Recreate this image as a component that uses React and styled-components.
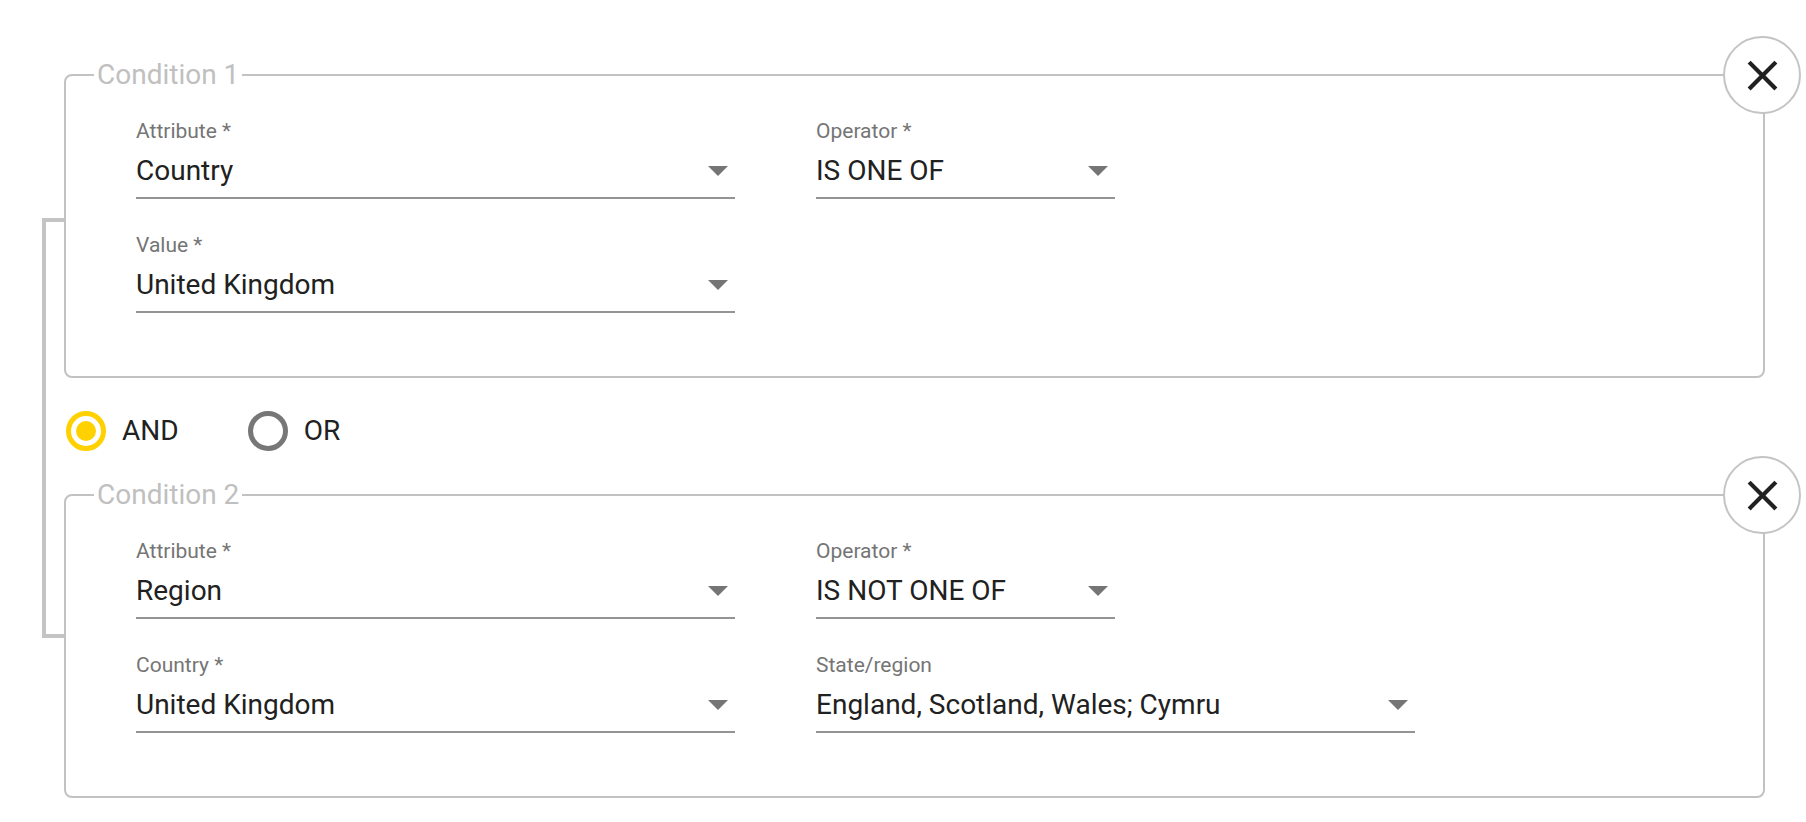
import React from "react";
import styled, { createGlobalStyle } from "styled-components";

const GlobalStyle = createGlobalStyle`
  body {
    margin: 0;
    background: #ffffff;
    font-family: Roboto, "Liberation Sans", sans-serif;
  }
`;

const Page = styled.div`
  padding: 60px 41px 0 42px;
`;

const Group = styled.div`
  display: flex;
`;

const Bracket = styled.div`
  width: 22px;
  flex: none;
  margin: 158px 0 160px;
  border: 4px solid #c4c4c4;
  border-right: none;
  box-sizing: border-box;
`;

const Stack = styled.div`
  flex: 1;
  display: flex;
  flex-direction: column;
`;

const CardWrap = styled.div`
  position: relative;
`;

const Fieldset = styled.fieldset`
  margin: 0;
  padding: 0;
  min-width: 0;
  border: 2px solid #c2c2c2;
  border-radius: 8px;
`;

const Legend = styled.legend`
  margin-left: 28px;
  padding: 0 3px;
  font-size: 28px;
  line-height: 30px;
  color: #c0c0c0;
`;

const Body = styled.div`
  display: flex;
  flex-direction: column;
  gap: 34px;
  padding: 29px 0 63px 70px;
`;

const FieldRow = styled.div`
  display: flex;
  gap: 81px;
`;

const Field = styled.div`
  width: ${(p) => (p.$narrow ? "299px" : "599px")};
  display: flex;
  flex-direction: column;
`;

const Label = styled.div`
  font-size: 21px;
  line-height: 24px;
  color: #757575;
  margin-bottom: 12px;
`;

const Control = styled.div`
  display: flex;
  align-items: center;
  justify-content: space-between;
  padding: 0 7px 10px 0;
  border-bottom: 2px solid #949494;
`;

const Value = styled.span`
  font-size: 28px;
  line-height: 32px;
  color: #212121;
`;

const CloseButton = styled.button`
  position: absolute;
  top: -24px;
  right: -36px;
  width: 78px;
  height: 78px;
  padding: 0;
  border-radius: 50%;
  border: 2px solid #c4c4c4;
  background: #ffffff;
  display: flex;
  align-items: center;
  justify-content: center;
  cursor: pointer;
`;

const Connector = styled.div`
  display: flex;
  align-items: center;
  gap: 69px;
  height: 40px;
  margin: 33px 0 29px;
  padding-left: 2px;
`;

const RadioOption = styled.label`
  display: flex;
  align-items: center;
  gap: 16px;
  cursor: pointer;
`;

const RadioRing = styled.span`
  width: 40px;
  height: 40px;
  box-sizing: border-box;
  border-radius: 50%;
  border: 5px solid ${(p) => (p.$checked ? "#ffd100" : "#777777")};
  display: flex;
  align-items: center;
  justify-content: center;

  &::after {
    content: "";
    display: ${(p) => (p.$checked ? "block" : "none")};
    width: 20px;
    height: 20px;
    border-radius: 50%;
    background: #ffd100;
  }
`;

const RadioText = styled.span`
  font-size: 28px;
  line-height: 32px;
  color: #212121;
`;

const ArrowDown = () => (
  <svg width="20" height="10" viewBox="0 0 20 10">
    <path d="M0 0h20L10 10z" fill="#757575" />
  </svg>
);

const CloseIcon = () => (
  <svg width="51" height="51" viewBox="0 0 24 24">
    <path
      fill="#212121"
      d="M19 6.41L17.59 5 12 10.59 6.41 5 5 6.41 10.59 12 5 17.59 6.41 19 12 13.41 17.59 19 19 17.59 13.41 12z"
    />
  </svg>
);

const conditions = [
  {
    title: "Condition 1",
    rows: [
      [
        { label: "Attribute *", value: "Country" },
        { label: "Operator *", value: "IS ONE OF", narrow: true },
      ],
      [{ label: "Value *", value: "United Kingdom" }],
    ],
  },
  {
    title: "Condition 2",
    rows: [
      [
        { label: "Attribute *", value: "Region" },
        { label: "Operator *", value: "IS NOT ONE OF", narrow: true },
      ],
      [
        { label: "Country *", value: "United Kingdom" },
        { label: "State/region", value: "England, Scotland, Wales; Cymru" },
      ],
    ],
  },
];

function Condition({ condition }) {
  return (
    <CardWrap>
      <Fieldset>
        <Legend>{condition.title}</Legend>
        <Body>
          {condition.rows.map((row, i) => (
            <FieldRow key={i}>
              {row.map((f) => (
                <Field key={f.label} $narrow={f.narrow}>
                  <Label>{f.label}</Label>
                  <Control>
                    <Value>{f.value}</Value>
                    <ArrowDown />
                  </Control>
                </Field>
              ))}
            </FieldRow>
          ))}
        </Body>
      </Fieldset>
      <CloseButton aria-label="Remove condition">
        <CloseIcon />
      </CloseButton>
    </CardWrap>
  );
}

export default function App() {
  return (
    <>
      <GlobalStyle />
      <Page>
        <Group>
          <Bracket />
          <Stack>
            <Condition condition={conditions[0]} />
            <Connector>
              <RadioOption>
                <RadioRing $checked />
                <RadioText>AND</RadioText>
              </RadioOption>
              <RadioOption>
                <RadioRing />
                <RadioText>OR</RadioText>
              </RadioOption>
            </Connector>
            <Condition condition={conditions[1]} />
          </Stack>
        </Group>
      </Page>
    </>
  );
}
